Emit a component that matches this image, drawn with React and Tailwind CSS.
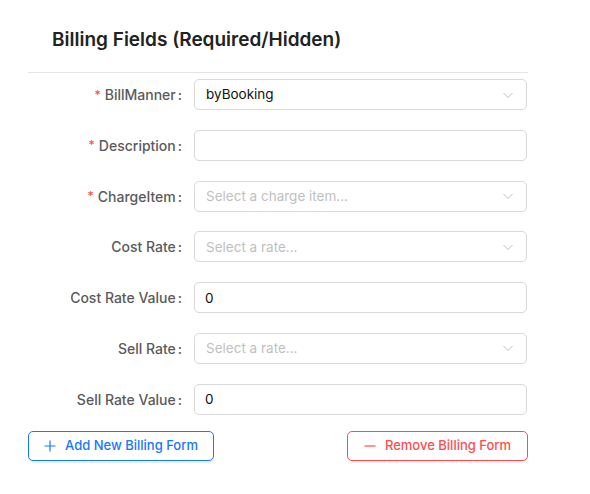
import React from "react";

const Chevron = () => (
  <svg width="12" height="12" viewBox="0 0 12 12" fill="none" className="shrink-0">
    <path d="M1.5 4 L6 8.5 L10.5 4" stroke="#bfbfbf" strokeWidth="1" />
  </svg>
);

function Row({ label, required, children }) {
  return (
    <div className="flex items-center h-[31px]">
      <div className="w-[166px] flex justify-end items-center text-[14px] font-medium text-[#5a5a5a] whitespace-nowrap">
        {required && <span className="text-[#ff4d4f] mr-[4px] text-[12px]">*</span>}
        <span>{label}</span>
        <span className="ml-[2px] mr-[12px]">:</span>
      </div>
      <div className="w-[333px]">{children}</div>
    </div>
  );
}

function Select({ value, placeholder }) {
  return (
    <div className="h-[31px] border border-[#d9d9d9] rounded-[5px] flex items-center justify-between pl-[11px] pr-[12px] text-[13.5px]">
      {value ? (
        <span className="text-[#111]">{value}</span>
      ) : (
        <span className="text-[#bfbfbf]">{placeholder}</span>
      )}
      <Chevron />
    </div>
  );
}

function Input({ value }) {
  return (
    <div className="h-[31px] border border-[#d9d9d9] rounded-[5px] flex items-center px-[10px] text-[13.5px] text-[#111]">
      {value}
    </div>
  );
}

export default function App() {
  return (
    <div className="w-[590px] h-[494px] bg-white pl-[28px] pt-[27px]" style={{ fontFamily: "Inter, 'Noto Sans', sans-serif" }}>
      <div className="w-[500px]">
        <h2 className="pl-[24px] text-[19px] leading-[25px] font-semibold text-[#222] pb-[20px] border-b border-[#e5e5e5]">
          Billing Fields (Required/Hidden)
        </h2>
        <div className="pt-[6px] flex flex-col gap-[19.8px]">
          <Row label="BillManner" required><Select value="byBooking" /></Row>
          <Row label="Description" required><Input value="" /></Row>
          <Row label="ChargeItem" required><Select placeholder="Select a charge item..." /></Row>
          <Row label="Cost Rate"><Select placeholder="Select a rate..." /></Row>
          <Row label="Cost Rate Value"><Input value="0" /></Row>
          <Row label="Sell Rate"><Select placeholder="Select a rate..." /></Row>
          <Row label="Sell Rate Value"><Input value="0" /></Row>
        </div>
        <div className="flex justify-between mt-[16px]">
          <button className="w-[186px] h-[30px] border border-[#1677ff] rounded-[5px] text-[#1677ff] text-[13px] font-medium flex items-center justify-center gap-[9px] shadow-[0_2px_0_rgba(5,145,255,0.1)]">
            <svg width="12" height="12" viewBox="0 0 12 12"><path d="M6 0.5 V11.5 M0.5 6 H11.5" stroke="#1677ff" strokeWidth="1.2" /></svg>
            Add New Billing Form
          </button>
          <button className="w-[181px] h-[30px] border border-[#ff4d4f] rounded-[5px] text-[#ff4d4f] text-[13px] font-medium flex items-center justify-center gap-[9px] shadow-[0_2px_0_rgba(255,38,5,0.06)]">
            <svg width="12" height="12" viewBox="0 0 12 12"><path d="M0.5 6 H11.5" stroke="#ff4d4f" strokeWidth="1.2" /></svg>
            Remove Billing Form
          </button>
        </div>
      </div>
    </div>
  );
}
